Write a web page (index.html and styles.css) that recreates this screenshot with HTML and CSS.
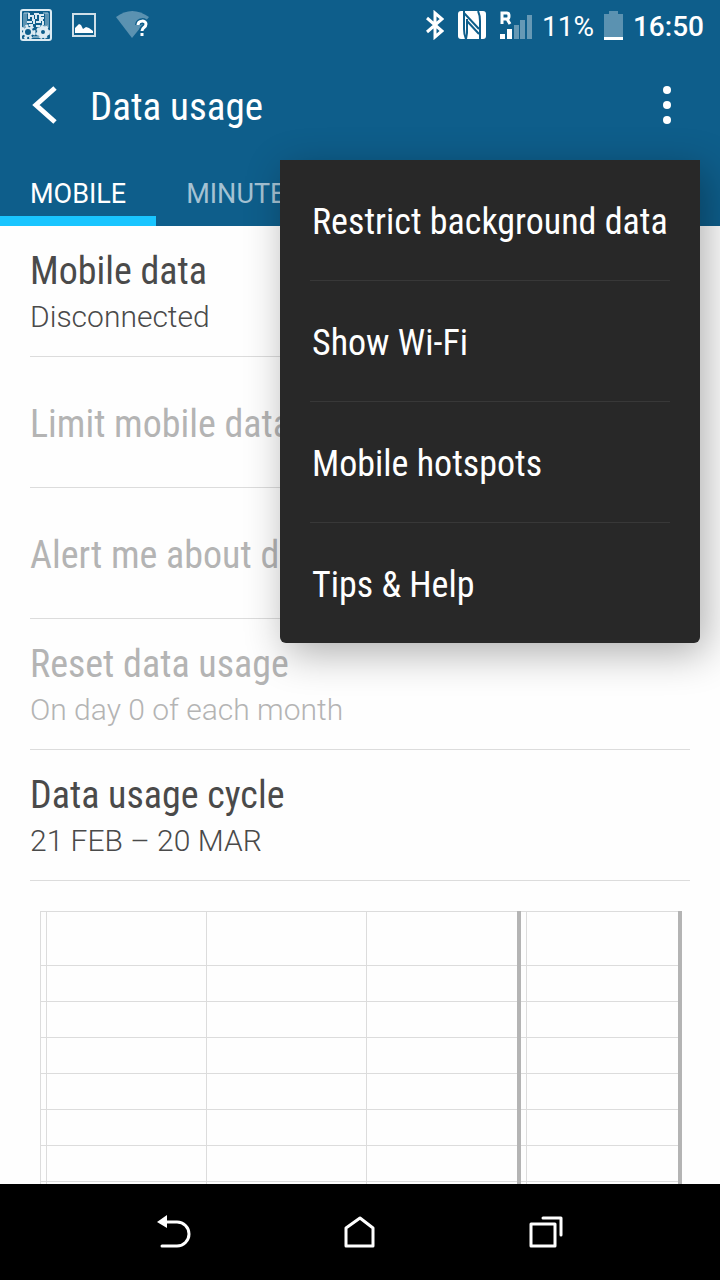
FILE: index.html
```
<!DOCTYPE html>
<html lang="en">
<head>
    <meta charset="UTF-8">
    <meta name="viewport" content="width=device-width, initial-scale=1.0">
    <title>Data usage</title>
    <link rel="stylesheet" href="styles.css">
</head>
<body>
    <header class="top">
        <div class="status-bar">
            <div class="status-left">
                <svg width="32" height="32" viewBox="0 0 32 32" fill="none" stroke="#dcebf3">
                    <rect x="1" y="1" width="30" height="30" rx="2" stroke-width="2"/>
                    <path d="M4 4v15M6 4v12M4 4h5M23 4h5M28 4v14M26 4v12M4 18h3M24 17h4" stroke-width="1" stroke="#a9c8d9"/>
                    <path d="M9 4v6M9 7h4v3M14 5h5M16 5v5M24 6h-4v3h4" stroke-width="2"/>
                    <path d="M7 13h5M14 12v3M16 13h5M23 12v4M9 16h4M16 17h4M12 11h3M19 11h4" stroke-width="2"/>
                    <circle cx="8" cy="23" r="4" stroke-width="2"/>
                    <circle cx="8" cy="23" r="6" stroke-width="3" stroke-dasharray="3 2"/>
                    <circle cx="23" cy="23" r="4" stroke-width="4"/>
                    <circle cx="23" cy="23" r="6" stroke-width="2" stroke-dasharray="3 2"/>
                    <path d="M14 25h3M13 28h6" stroke-width="1"/>
                </svg>
                <svg width="24" height="24" viewBox="0 0 24 24">
                    <rect x="1" y="1" width="22" height="22" fill="none" stroke="#cfdfe8" stroke-width="2"/>
                    <path d="M3 20v-5l4-4 2 1 2 4 3-2 3 1 4 3v2z" fill="#fff"/>
                </svg>
                <svg width="34" height="28" viewBox="0 0 34 28">
                    <path d="M0 6Q16-6 33 6L16 27z" fill="#5b92b1"/>
                    <path d="M22 14c0-5 8-5 8-1 0 4-4 3-4 7M26 22v3" fill="none" stroke="#0e5e8b" stroke-width="6"/>
                    <path d="M22 14c0-5 8-5 8-1 0 4-4 3-4 7M26 22v3" fill="none" stroke="#fff" stroke-width="3"/>
                </svg>
            </div>
            <div class="status-right">
                <svg width="18" height="30" viewBox="0 0 18 30" fill="none" stroke="#fff" stroke-width="3">
                    <path d="M1 8l15 13-7 6V3l7 6L1 22"/>
                </svg>
                <svg class="nfc" width="28" height="28" viewBox="0 0 28 28">
                    <rect width="28" height="28" rx="3" fill="#fff"/>
                    <path d="M8 28Q6 24 6 18V0M6 2l15 16M22 28V10Q22 4 20 0" fill="none" stroke="#0e5e8b" stroke-width="2"/>
                    <path d="M9 8v14l-1 6M9 10l12 13" fill="none" stroke="#0e5e8b" stroke-width="2"/>
                </svg>
                <svg class="signal" width="32" height="28" viewBox="0 0 32 28">
                    <path d="M2 13V2h5q2 0 2 3t-2 3H3M7 8l3 5" fill="none" stroke="#fff" stroke-width="3"/>
                    <path d="M0 23h5v5H0zM7 18h5v10H7z" fill="#fff"/>
                    <path d="M14 14h5v14h-5zM20 9h5v19h-5zM27 4h5v24h-5z" fill="#6699b5"/>
                </svg>
                <span class="percent">11%</span>
                <svg width="19" height="29" viewBox="0 0 19 29">
                    <path d="M0 3h5V0h9v3h5v23H0z" fill="#5b92b1"/>
                    <path d="M0 26h19v3H0z" fill="#fff"/>
                </svg>
                <span class="clock">16:50</span>
            </div>
        </div>

        <div class="title-bar">
            <button class="icon-button" aria-label="Back">
                <svg width="26" height="38" viewBox="0 0 26 38" fill="none" stroke="#fff" stroke-width="5">
                    <path d="M23 2L4 19l19 17"/>
                </svg>
            </button>
            <h1>Data usage</h1>
            <button class="icon-button" aria-label="More options">
                <svg width="8" height="38" viewBox="0 0 8 38" fill="#fff">
                    <circle cx="4" cy="4" r="4"/>
                    <circle cx="4" cy="19" r="4"/>
                    <circle cx="4" cy="34" r="4"/>
                </svg>
            </button>
        </div>

        <nav class="tabs">
            <button class="tab active">MOBILE</button>
            <button class="tab">MINUTES</button>
        </nav>

        <div class="menu">
            <button class="menu-item">Restrict background data</button>
            <button class="menu-item">Show Wi-Fi</button>
            <button class="menu-item">Mobile hotspots</button>
            <button class="menu-item">Tips &amp; Help</button>
        </div>
    </header>

    <main>
        <ul class="settings">
            <li class="row">
                <h2>Mobile data</h2>
                <p>Disconnected</p>
            </li>
            <li class="row disabled">
                <h2>Limit mobile data</h2>
            </li>
            <li class="row disabled">
                <h2>Alert me about d</h2>
            </li>
            <li class="row disabled">
                <h2>Reset data usage</h2>
                <p>On day 0 of each month</p>
            </li>
            <li class="row">
                <h2>Data usage cycle</h2>
                <p>21 FEB – 20 MAR</p>
            </li>
        </ul>

        <div class="chart">
            <div class="week first"></div>
            <div class="week"></div>
            <div class="week"></div>
            <div class="week"></div>
            <div class="week last"></div>
            <div class="sweep sweep-start"></div>
            <div class="sweep sweep-end"></div>
        </div>
    </main>

    <footer class="nav-bar">
        <button class="icon-button" aria-label="Back">
            <svg width="36" height="34" viewBox="0 0 36 34">
                <path d="M10 7h11a12 12 0 0 1 0 24H6" fill="none" stroke="#fff" stroke-width="3" stroke-linecap="round"/>
                <path d="M1 7l10-7v13z" fill="#fff"/>
            </svg>
        </button>
        <button class="icon-button" aria-label="Home">
            <svg width="32" height="34" viewBox="0 0 32 34" fill="none" stroke="#fff" stroke-width="3" stroke-linejoin="round">
                <path d="M2 13L16 3l13 10v18H2z"/>
            </svg>
        </button>
        <button class="icon-button" aria-label="Recent apps">
            <svg width="36" height="34" viewBox="0 0 36 34" fill="none" stroke="#fff" stroke-width="3" stroke-linejoin="round" stroke-linecap="round">
                <path d="M3 9h24v22H3zM15 3h18v17"/>
            </svg>
        </button>
    </footer>
</body>
</html>
```
FILE: styles.css
```
* {
    box-sizing: border-box;
}
body {
    font-family: Roboto, sans-serif;
    margin: 0;
    height: 100vh;
    display: flex;
    flex-direction: column;
    background-color: #fefefe;
    color: #4a4a4a;
}
h1, h2, p, ul {
    margin: 0;
    padding: 0;
    font-weight: 400;
}
h1, h2, .menu-item {
    font-family: "Roboto Condensed", Roboto, sans-serif;
}
button {
    border: 0;
    background: none;
    color: #fff;
    font-family: inherit;
    cursor: pointer;
}
svg {
    display: block;
}

/* header */
.top {
    position: relative;
    background-color: #0e5e8b;
    color: #fff;
}
.status-bar {
    display: flex;
    justify-content: space-between;
    align-items: center;
    height: 50px;
    padding: 0 16px 0 20px;
}
.status-left {
    display: flex;
    align-items: center;
    gap: 20px;
}
.status-right {
    display: flex;
    align-items: center;
    gap: 10px;
}
.nfc {
    margin: 0 4px;
}
.percent, .clock {
    padding-top: 2px;
    font-size: 28px;
}
.clock {
    font-weight: 500;
}
.title-bar {
    display: flex;
    align-items: center;
    height: 110px;
    padding: 0 49px 0 32px;
}
.title-bar h1 {
    flex-grow: 1;
    margin-left: 32px;
    padding-top: 4px;
    font-size: 39px;
}
.icon-button {
    padding: 0;
}
.tabs {
    display: flex;
    height: 66px;
}
.tab {
    padding: 12px 30px 0;
    border-bottom: 10px solid transparent;
    font-size: 27px;
    color: #a5c2d3;
}
.tab.active {
    color: #fff;
    border-bottom-color: #19c5ff;
}

/* overflow menu */
.menu {
    position: absolute;
    top: 160px;
    right: 20px;
    z-index: 1;
    width: 420px;
    padding: 0 30px;
    background-color: #282828;
    border-radius: 0 0 6px 6px;
    box-shadow: 6px 10px 40px rgba(0, 0, 0, 0.32);
}
.menu-item {
    display: block;
    width: 100%;
    height: 121px;
    padding: 4px 2px 0;
    border-bottom: 1px solid #383838;
    font-size: 36px;
    text-align: left;
    white-space: nowrap;
}
.menu-item:last-child {
    height: 120px;
    border-bottom: 0;
}

/* settings list */
main {
    flex: 1;
    min-height: 0;
    display: flex;
    flex-direction: column;
    overflow: hidden;
}
.settings {
    list-style: none;
    padding: 0 30px;
}
.row {
    display: flex;
    flex-direction: column;
    justify-content: center;
    height: 131px;
    padding-top: 3px;
    border-bottom: 1px solid #dcdcdc;
}
.row h2 {
    font-size: 38px;
    line-height: 48px;
}
.row p {
    font-size: 30px;
    font-weight: 300;
    line-height: 44px;
}
.disabled {
    color: #b4b4b4;
}

/* usage chart */
.chart {
    position: relative;
    flex: 1;
    display: flex;
    margin: 30px 38px 0 40px;
    border-top: 1px solid #dcdcdc;
    background: repeating-linear-gradient(transparent 0 35px, #dcdcdc 35px 36px) 0 18px;
}
.week {
    flex: 0 0 calc((100% - 2px) / 4);
    border-left: 1px solid #dcdcdc;
}
.week.first {
    flex: 0 0 6px;
}
.week.last {
    flex: 1;
}
.sweep {
    position: absolute;
    top: -1px;
    bottom: 0;
    width: 4px;
    background-color: #b4b4b4;
}
.sweep-start {
    left: calc(75% - 5px);
}
.sweep-end {
    right: 0;
}

/* system buttons */
.nav-bar {
    display: flex;
    justify-content: center;
    align-items: center;
    gap: 152px;
    height: 96px;
    background-color: #000;
}
```
